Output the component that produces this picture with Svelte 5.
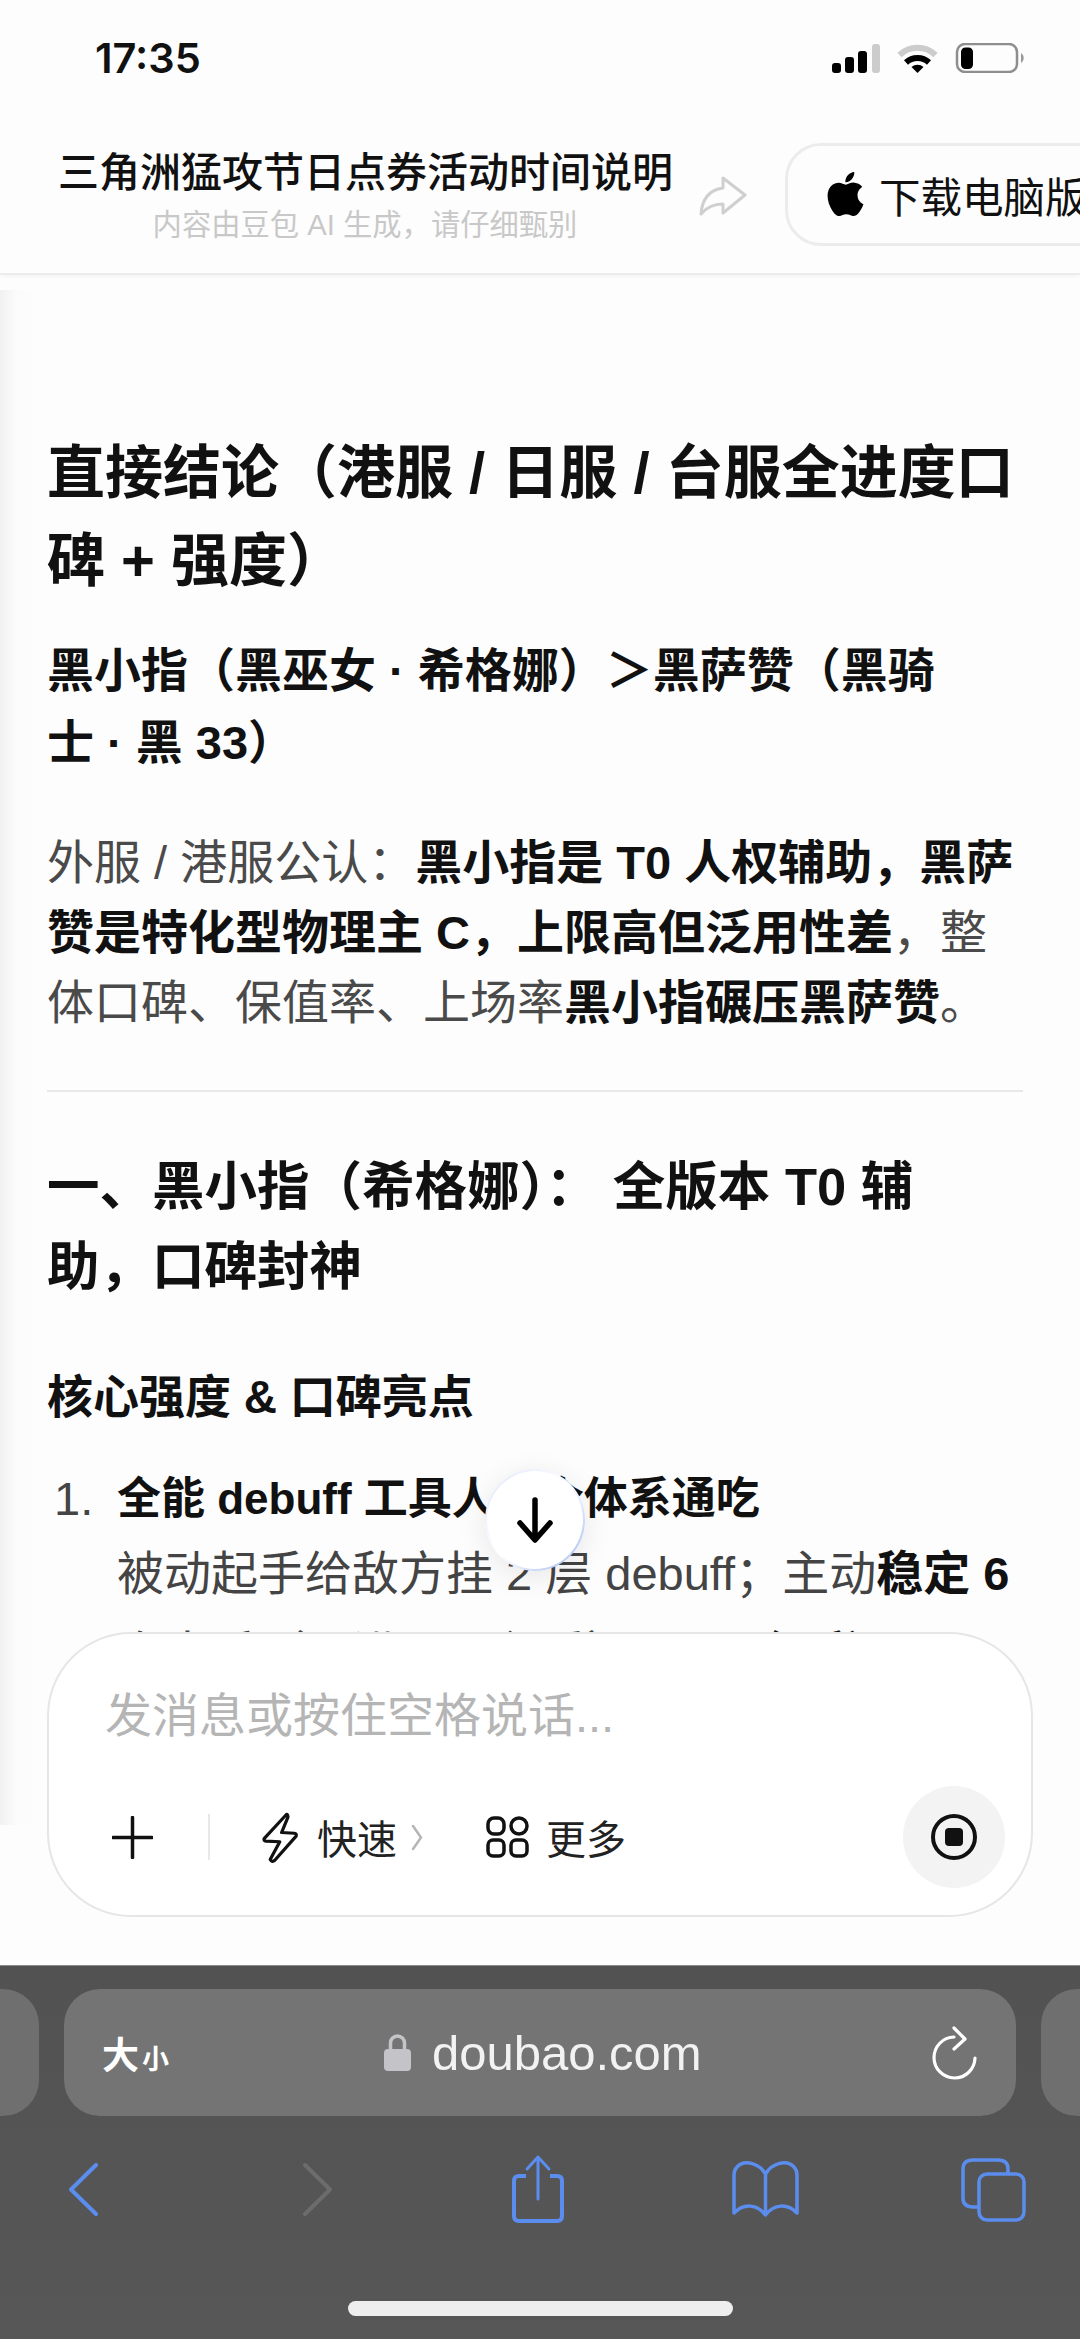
<script lang="ts">
    const placeholder = "发消息或按住空格说话...";
</script>

<div class="page">
    <div class="status">
        <span class="time">17:35</span>
        <svg class="status-icons" width="192" height="30" viewBox="832 43 192 30">
            <rect x="832" y="63" width="9" height="10" rx="3" fill="#000" />
            <rect x="845" y="57" width="9" height="16" rx="3" fill="#000" />
            <rect x="858" y="51" width="9" height="22" rx="3" fill="#000" />
            <rect x="872" y="44" width="8" height="29" rx="3" fill="#ccc" />
            <path d="M899.5 55 A26 26 0 0 1 935.5 55" fill="none" stroke="#ccc" stroke-width="6" />
            <path d="M906 62.5 A17 17 0 0 1 929 62.5" fill="none" stroke="#000" stroke-width="6" />
            <path d="M911.5 67 L917.5 73 L923.5 67 A9 9 0 0 0 911.5 67 Z" fill="#000" />
            <rect x="957" y="44" width="60" height="28" rx="8" fill="none" stroke="#8e8e8e" stroke-width="2.5" />
            <rect x="961" y="47.500" width="12" height="21.500" rx="4.500" fill="#000" />
            <path d="M1021 53 A6 6 0 0 1 1021 63 Z" fill="#999" />
        </svg>
    </div>

    <header class="header">
        <div class="title-col">
            <div class="title">三角洲猛攻节日点券活动时间说明</div>
            <div class="subtitle">内容由豆包 AI 生成，请仔细甄别</div>
        </div>
        <svg class="share" width="48" height="42" viewBox="698 175 48 42">
            <path d="M722 178 L744 195 L722 213 V204 C712 204 705 208 700 214 C701 200 708 190 722 188 Z" fill="none" stroke="#cfcfcf" stroke-width="3" stroke-linejoin="round" />
        </svg>
        <div class="download">
            <svg width="37" height="44" viewBox="2 0 20 24">
                <path d="M12.152 6.896c-.948 0-2.415-1.078-3.96-1.04-2.04.027-3.91 1.183-4.961 3.014-2.117 3.675-.546 9.103 1.519 12.09 1.013 1.454 2.208 3.09 3.792 3.039 1.52-.065 2.09-.987 3.935-.987 1.831 0 2.35.987 3.96.948 1.637-.026 2.676-1.48 3.676-2.948 1.156-1.688 1.636-3.325 1.662-3.415-.039-.013-3.182-1.221-3.22-4.857-.026-3.04 2.48-4.494 2.597-4.559-1.429-2.09-3.623-2.324-4.39-2.376-2-.156-3.675 1.09-4.61 1.09zM15.53 3.83c.843-1.012 1.4-2.427 1.245-3.83-1.207.052-2.662.805-3.532 1.818-.78.896-1.454 2.338-1.273 3.714 1.338.104 2.715-.688 3.559-1.701" fill="#000" />
            </svg>
            <span>下载电脑版</span>
        </div>
    </header>

    <main class="chat">
        <div class="edge"></div>
        <article class="content">
            <h1>直接结论（港服 / 日服 / 台服全进度口碑 + 强度）</h1>
            <h2>黑小指（黑巫女 · 希格娜）＞黑萨赞（黑骑<br />士 · 黑 33）</h2>
            <p>外服 / 港服公认：<b>黑小指是 T0 人权辅助，黑萨赞是特化型物理主 C，上限高但泛用性差</b>，整体口碑、保值率、上场率<b>黑小指碾压黑萨赞</b>。</p>
            <hr />
            <h2 class="section">一、黑小指（希格娜）： 全版本 T0 辅<br />助，口碑封神</h2>
            <h3>核心强度 &amp; 口碑亮点</h3>
            <ol>
                <li>
                    <span class="num">1.</span>
                    <div>
                        <b class="lead">全能 debuff 工具人，全体系通吃</b>
                        <div>被动起手给敌方挂 2 层 debuff；主动<b>稳定 6</b></div>
                        <div class="clipped">次出手（易进 CD 必看），&emsp;<b>三个延迟</b></div>
                    </div>
                </li>
            </ol>
        </article>

        <button class="scroll-down" aria-label="scroll down">
            <svg width="36" height="46" viewBox="0 0 36 46">
                <path d="M18 3 V42 M3 26 L18 43 L33 26" fill="none" stroke="#000" stroke-width="5.500" stroke-linecap="round" stroke-linejoin="round" />
            </svg>
        </button>

        <div class="composer">
            <div class="placeholder">{placeholder}</div>
            <div class="composer-row">
                <svg class="plus" width="41" height="43" viewBox="0 0 41 43">
                    <path d="M20.500 1.500 V41.500 M1 21.500 H40" stroke="#111" stroke-width="3.500" stroke-linecap="round" />
                </svg>
                <span class="sep"></span>
                <svg class="bolt" width="37" height="53" viewBox="480 68 104 148">
                    <path d="M548 78 L486 145 Q484 151 491 152 L530 154 L503 204 Q508 213 516 206 L576 138 Q578 131 571 130 L535 128 L553 85 Q552 74 548 78 Z" fill="none" stroke="#111" stroke-width="9" stroke-linejoin="round" />
                </svg>
                <span class="label fast">快速</span>
                <svg class="chev" width="12" height="27" viewBox="0 0 12 27">
                    <path d="M2 2 L10 13.500 L2 25" fill="none" stroke="#b5b5b5" stroke-width="2.500" stroke-linecap="round" />
                </svg>
                <svg class="more" width="43" height="42" viewBox="0 0 43 42">
                    <rect x="2" y="2" width="16" height="16" rx="6" fill="none" stroke="#111" stroke-width="3.500" />
                    <circle cx="33" cy="10" r="8" fill="none" stroke="#111" stroke-width="3.500" />
                    <rect x="2" y="24" width="16" height="16" rx="5" fill="none" stroke="#111" stroke-width="3.500" />
                    <rect x="25" y="24" width="16" height="16" rx="5" fill="none" stroke="#111" stroke-width="3.500" />
                </svg>
                <span class="label more-label">更多</span>
                <button class="mic" aria-label="voice">
                    <span class="ring"><span class="dot"></span></span>
                </button>
            </div>
        </div>
    </main>

    <footer class="toolbar">
        <div class="url-row">
            <div class="side-tab"></div>
            <div class="url">
                <span class="aa"><span class="big">大</span><span class="small">小</span></span>
                <span class="domain">
                    <svg width="27" height="37" viewBox="0 0 27 37">
                        <path d="M6.500 17 V9 A7 7 0 0 1 20.500 9 V17" fill="none" stroke="#c3c3c8" stroke-width="3.500" />
                        <rect x="0" y="15" width="27" height="22" rx="4" fill="#c3c3c8" />
                    </svg>
                    doubao.com
                </span>
                <svg class="reload" width="46" height="54" viewBox="930 2023 46 54">
                    <path d="M952 2034 A20.500 20.500 0 1 0 973 2055" fill="none" stroke="#fff" stroke-width="3.200" stroke-linecap="round" />
                    <path d="M952 2025 L963 2036 L952 2046" fill="none" stroke="#fff" stroke-width="3.200" stroke-linecap="round" stroke-linejoin="round" />
                </svg>
            </div>
            <div class="side-tab"></div>
        </div>
        <nav class="tools">
            <svg width="30" height="53" viewBox="0 0 30 53">
                <path d="M27 2 L2 26.500 L27 51" fill="none" stroke="#5b8def" stroke-width="4" stroke-linecap="round" stroke-linejoin="round" />
            </svg>
            <svg class="fwd" width="30" height="53" viewBox="0 0 30 53">
                <path d="M3 2 L28 26.500 L3 51" fill="none" stroke="#6c6c6c" stroke-width="4" stroke-linecap="round" stroke-linejoin="round" />
            </svg>
            <svg width="54" height="70" viewBox="513 2150 54 70">
                <path d="M528 2172 H521 Q516 2172 516 2177 V2212 Q516 2217 521 2217 H559 Q564 2217 564 2212 V2177 Q564 2172 559 2172 H552" fill="none" stroke="#5b8def" stroke-width="4" />
                <path d="M540 2153 V2195 M529 2165 L540 2153 L551 2165" fill="none" stroke="#5b8def" stroke-width="3" stroke-linecap="round" stroke-linejoin="round" />
            </svg>
            <svg width="69" height="58" viewBox="732 2159 69 58">
                <path d="M766.500 2173 C760 2162 745 2158 738 2166 Q735 2169 735 2174 V2212 C745 2202 758 2203 766.500 2214 C775 2203 788 2202 798 2212 V2174 Q798 2169 795 2166 C788 2158 773 2162 766.500 2173 V2214" fill="none" stroke="#5b8def" stroke-width="3.500" stroke-linejoin="round" />
            </svg>
            <svg width="66" height="65" viewBox="960 2154 66 65">
                <path d="M978 2204 H973 Q963 2204 963 2195 V2166 Q963 2157 973 2157 H998 Q1008 2157 1008 2166 V2170" fill="none" stroke="#5b8def" stroke-width="3.500" />
                <rect x="979" y="2171" width="45" height="46" rx="8" fill="none" stroke="#5b8def" stroke-width="3.500" />
            </svg>
        </nav>
        <div class="home"></div>
    </footer>
</div>

<style>
:global(body) {
    margin: 0;
    background: #fdfdfd;
}

.page {
    height: 2339px;
    width: 1080px;
    display: flex;
    flex-direction: column;
    overflow: hidden;
    font-family: "Liberation Sans", "Noto Sans CJK SC", sans-serif;
    color: #111;
}

.status {
    height: 90px;
    box-sizing: border-box;
    padding: 38px 56px 0 95px;
    display: flex;
    justify-content: space-between;
    align-items: flex-start;
    background: #fdfdfd;
}
.time {
    font-family: Inter, "Liberation Sans", sans-serif;
    font-size: 41.500px;
    line-height: 40px;
    font-weight: 600;
}
.status-icons {
    margin-top: 5px;
}

.header {
    height: 185px;
    box-sizing: border-box;
    padding: 53px 0 0 58px;
    display: flex;
    align-items: flex-start;
    background: #fdfdfd;
    border-bottom: 2px solid #ececec;
    box-shadow: 0 3px 4px -2px #f0f0f0;
    position: relative;
    z-index: 1;
}
.title-col {
    width: 614px;
    flex-shrink: 0;
    text-align: center;
}
.title {
    font-size: 41px;
    line-height: 60px;
    font-weight: 500;
    white-space: nowrap;
}
.subtitle {
    font-size: 29.300px;
    line-height: 38px;
    margin-top: 3px;
    color: #c8c8c8;
    white-space: nowrap;
}
.share {
    flex-shrink: 0;
    margin: 32px 38px 0 27px;
}
.download {
    flex-shrink: 0;
    height: 103px;
    box-sizing: border-box;
    padding-left: 39px;
    padding-right: 40px;
    display: flex;
    align-items: center;
    gap: 15px;
    border: 3px solid #ececec;
    border-radius: 36px;
    font-size: 41.500px;
    white-space: nowrap;
}
.download svg {
    margin-bottom: 2px;
}

.chat {
    flex: 1;
    position: relative;
    overflow: hidden;
    background: #fdfdfd;
}
.edge {
    position: absolute;
    left: 0;
    top: 15px;
    height: 1535px;
    width: 40px;
    background: linear-gradient(90deg, #f1f1f1, #fbfbfb 40%, #fdfdfd);
}
.content {
    position: relative;
    padding: 154px 57px 0 47px;
}
h1 {
    margin: 0;
    font-size: 58px;
    line-height: 88px;
    font-weight: 700;
}
h2 {
    margin: 30px 0 0;
    font-size: 47px;
    line-height: 72px;
    font-weight: 700;
}
p {
    margin: 49px 0 0;
    font-size: 47px;
    line-height: 70px;
    color: #4a4a4a;
}
p b {
    color: #111;
}
hr {
    margin: 52px 0 0;
    border: 0;
    border-top: 2px solid #e8e8e8;
}
h2.section {
    margin-top: 55px;
    font-size: 52.500px;
    line-height: 80px;
}
h3 {
    margin: 60px 0 0;
    font-size: 46px;
    line-height: 60px;
    font-weight: 700;
}
ol {
    margin: 34px 0 0;
    padding: 0;
    list-style: none;
}
li {
    display: flex;
    font-size: 47px;
    line-height: 75px;
    color: #444;
    white-space: nowrap;
}
li b {
    color: #111;
}
.num {
    width: 70px;
    flex-shrink: 0;
    padding-left: 7px;
    box-sizing: border-box;
}
.lead {
    font-size: 44px;
    display: block;
}
.clipped {
    margin-top: 5px;
}

.scroll-down {
    position: absolute;
    left: 485px;
    top: 1194px;
    width: 100px;
    height: 102px;
    padding: 0;
    display: flex;
    align-items: center;
    justify-content: center;
    border: 2px solid transparent;
    border-radius: 50%;
    background: linear-gradient(#fff, #fff) padding-box, linear-gradient(135deg, #dfe6ff, #fff 50%, #9db6f2) border-box;
    box-shadow: 0 6px 30px rgba(0, 0, 0, 0.09);
}

.composer {
    position: absolute;
    left: 47px;
    top: 1357px;
    width: 986px;
    height: 285px;
    box-sizing: border-box;
    padding: 54px 26px 0 56px;
    background: #fff;
    border: 2px solid #e6e6e6;
    border-radius: 84px;
}
.placeholder {
    font-size: 47px;
    line-height: 56px;
    color: #b5b5b5;
}
.composer-row {
    margin-top: 42px;
    height: 102px;
    display: flex;
    align-items: center;
}
.plus {
    margin-left: 7px;
}
.sep {
    width: 2px;
    height: 46px;
    background: #e8e8e8;
    margin-left: 55px;
}
.bolt {
    margin-left: 52px;
}
.label {
    font-size: 40px;
    color: #222;
}
.fast {
    margin-left: 18px;
}
.chev {
    margin-left: 14px;
}
.more {
    margin-left: 63px;
}
.more-label {
    margin-left: 17px;
}
.mic {
    margin-left: auto;
    width: 102px;
    height: 102px;
    padding: 0;
    border: 0;
    border-radius: 50%;
    background: #f3f3f3;
    display: flex;
    align-items: center;
    justify-content: center;
}
.ring {
    width: 46px;
    height: 46px;
    box-sizing: border-box;
    border: 4px solid #111;
    border-radius: 50%;
    display: flex;
    align-items: center;
    justify-content: center;
}
.dot {
    width: 18px;
    height: 18px;
    border-radius: 4px;
    background: #111;
}

.toolbar {
    height: 374px;
    box-sizing: border-box;
    padding-top: 23px;
    background: linear-gradient(#525252, #575757);
    border-top: 1px solid #8a8a8a;
    overflow: hidden;
}
.url-row {
    display: flex;
    gap: 25px;
    margin-left: -40px;
    width: 1280px;
}
.side-tab {
    width: 79px;
    height: 127px;
    border-radius: 36px;
    background: #6f6f6f;
    flex-shrink: 0;
}
.url {
    width: 952px;
    height: 127px;
    flex-shrink: 0;
    box-sizing: border-box;
    padding: 0 38px 0 38px;
    background: #747474;
    border-radius: 36px;
    display: flex;
    align-items: center;
    justify-content: space-between;
    color: #fff;
    position: relative;
}
.aa {
    display: flex;
    align-items: baseline;
    font-weight: 700;
}
.big {
    font-size: 37px;
}
.small {
    font-size: 27px;
    margin-left: 3px;
}
.domain {
    position: absolute;
    left: 320px;
    display: flex;
    align-items: center;
    gap: 21px;
    font-size: 49px;
    color: #f2f2f2;
}
.tools {
    margin: 33px -27px 0 -30px;
    height: 80px;
    display: grid;
    grid-template-columns: repeat(5, 1fr);
    justify-items: center;
    align-items: center;
}
.fwd {
    margin-left: 12px;
}
.home {
    width: 385px;
    height: 15px;
    margin: 72px 0 0 348px;
    border-radius: 8px;
    background: #eeeeee;
}
</style>
